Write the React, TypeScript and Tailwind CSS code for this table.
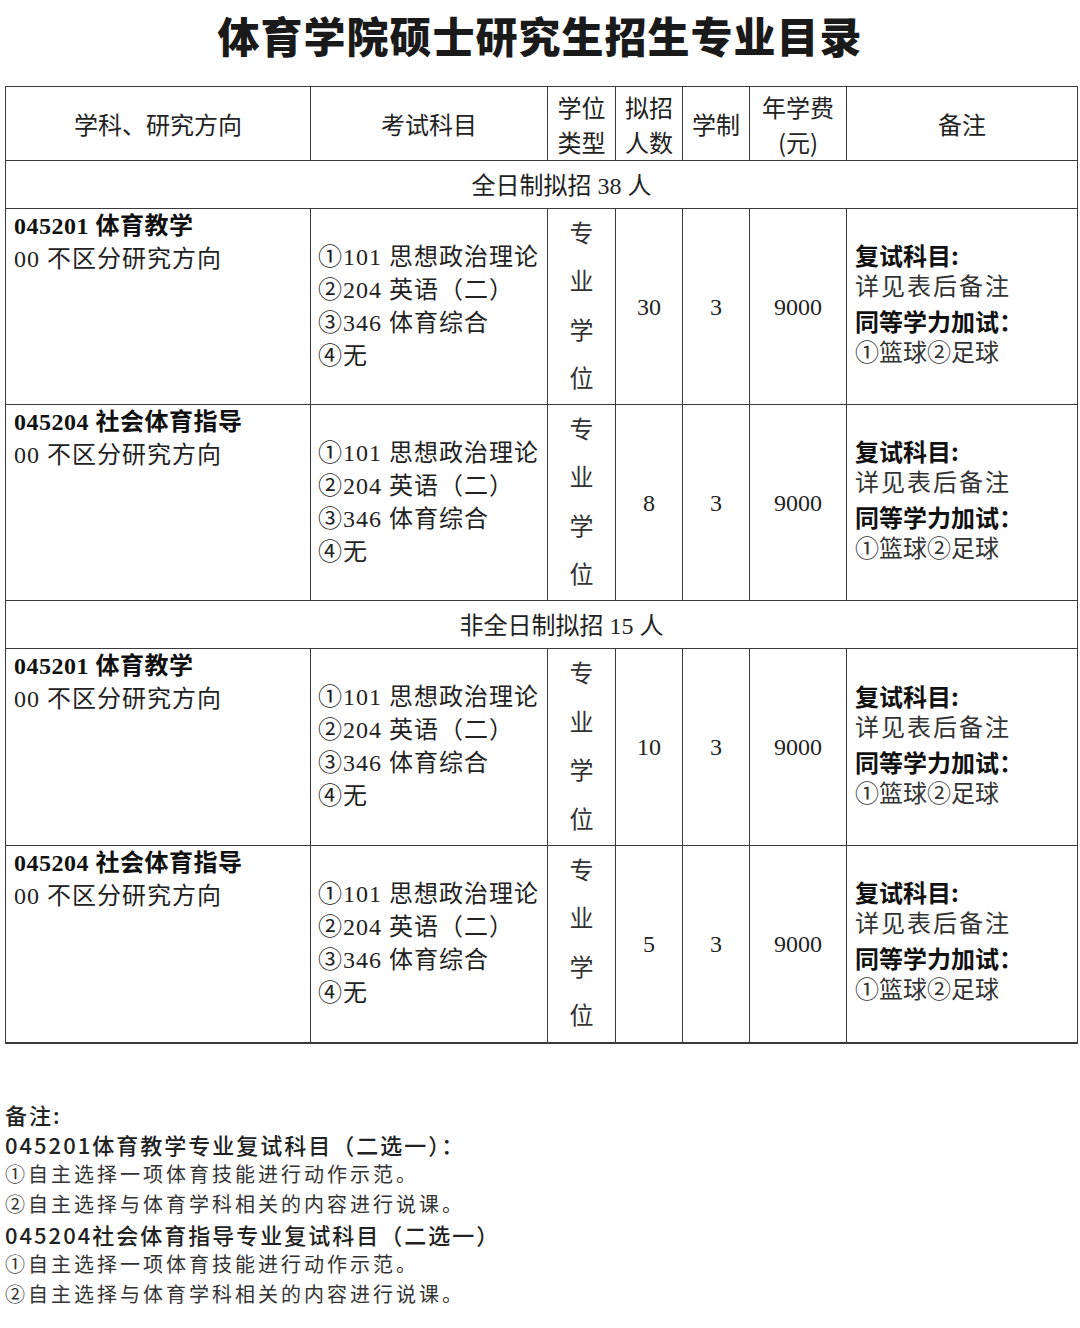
const serif = "font-['Liberation_Serif','Noto_Sans_CJK_SC',serif]";
const sans = "font-['Noto_Sans_CJK_SC','Liberation_Sans',sans-serif]";

type Row = {
  code: string;
  count: string;
};

const fullTime: Row[] = [
  { code: '045201 体育教学', count: '30' },
  { code: '045204 社会体育指导', count: '8' },
];

const partTime: Row[] = [
  { code: '045201 体育教学', count: '10' },
  { code: '045204 社会体育指导', count: '5' },
];

const cell = 'border-[1.5px] border-[#3a3a3a]';

function DataRow({ row, height }: { row: Row; height: string }) {
  return (
    <tr className={height}>
      <td className={`${cell} align-top pl-[8px] pt-[1px] text-[24px] leading-[33px] ${serif}`}>
        <div className="font-bold tracking-[0.5px] text-[#111]">{row.code}</div>
        <div className="tracking-[1px] text-[#222]">00 不区分研究方向</div>
      </td>
      <td className={`${cell} align-middle pl-[7px] text-[24px] leading-[33px] tracking-[1px] text-[#222] ${serif}`}>
        <div>①101 思想政治理论</div>
        <div>②204 英语（二）</div>
        <div>③346 体育综合</div>
        <div>④无</div>
      </td>
      <td className={`${cell} align-middle text-[24px] text-[#333] ${serif}`}>
        <div className="flex flex-col items-center leading-[48.5px]">
          <span>专</span>
          <span>业</span>
          <span>学</span>
          <span>位</span>
        </div>
      </td>
      <td className={`${cell} text-center align-middle text-[24px] text-[#222] ${serif}`}>{row.count}</td>
      <td className={`${cell} text-center align-middle text-[24px] text-[#222] ${serif}`}>3</td>
      <td className={`${cell} text-center align-middle text-[24px] text-[#222] ${serif}`}>9000</td>
      <td className={`${cell} align-middle pl-[8px] pb-[5px] text-[24px] leading-[33px] ${serif}`}>
        <div className={`font-bold text-[#111] ${sans}`}>复试科目:</div>
        <div className="tracking-[2px] text-[#333]">详见表后备注</div>
        <div className={`font-bold text-[#111] ${sans}`}>同等学力加试：</div>
        <div className="text-[#333]">①篮球②足球</div>
      </td>
    </tr>
  );
}

function SectionRow({ label, count }: { label: string; count: string }) {
  return (
    <tr className="h-[48px]">
      <td colSpan={7} className={`${cell} pl-[40px] text-center align-middle text-[24px] text-[#222] ${serif}`}>
        <span className={sans}>{label}</span> {count} 人
      </td>
    </tr>
  );
}

const noteHead = `h-[30px] text-[22px] leading-[30px] font-medium tracking-[2px] text-[#222] ${sans}`;
const noteItem = `h-[30px] text-[20px] leading-[30px] tracking-[3px] text-[#333] ${sans}`;

export default function App() {
  return (
    <div className="w-[1080px] h-[1328px] bg-white overflow-hidden">
      <div className="h-[86px] flex items-center justify-center pb-[18px]">
        <h1 className={`text-[42px] font-black tracking-[1px] text-[#1a1a1a] ${sans}`}>
          体育学院硕士研究生招生专业目录
        </h1>
      </div>

      <table className="ml-[5px] w-[1072px] table-fixed border-collapse border-b-[2.5px] border-[#3a3a3a]">
        <colgroup>
          <col className="w-[305px]" />
          <col className="w-[237px]" />
          <col className="w-[68px]" />
          <col className="w-[67px]" />
          <col className="w-[67px]" />
          <col className="w-[97px]" />
          <col className="w-[231px]" />
        </colgroup>
        <thead>
          <tr className={`h-[74px] text-[24px] text-[#222] ${sans}`}>
            <th className={`${cell} font-normal`}>学科、研究方向</th>
            <th className={`${cell} font-normal`}>考试科目</th>
            <th className={`${cell} font-normal leading-[35px]`}>
              学位
              <br />
              类型
            </th>
            <th className={`${cell} font-normal leading-[35px]`}>
              拟招
              <br />
              人数
            </th>
            <th className={`${cell} font-normal`}>学制</th>
            <th className={`${cell} font-normal leading-[35px]`}>
              年学费
              <br />
              (元)
            </th>
            <th className={`${cell} font-normal`}>备注</th>
          </tr>
        </thead>
        <tbody>
          <SectionRow label="全日制拟招" count="38" />
          {fullTime.map((row) => (
            <DataRow key={row.code} row={row} height="h-[196px]" />
          ))}
          <SectionRow label="非全日制拟招" count="15" />
          {partTime.map((row) => (
            <DataRow key={row.code + '-p'} row={row} height="h-[197px]" />
          ))}
        </tbody>
      </table>

      <div className="mt-[55px] pl-[5px] flex flex-col">
        <div className={noteHead}>备注:</div>
        <div className={noteHead}>045201体育教学专业复试科目（二选一）：</div>
        <div className={noteItem}>①自主选择一项体育技能进行动作示范。</div>
        <div className={noteItem}>②自主选择与体育学科相关的内容进行说课。</div>
        <div className={noteHead}>045204社会体育指导专业复试科目（二选一）</div>
        <div className={noteItem}>①自主选择一项体育技能进行动作示范。</div>
        <div className={noteItem}>②自主选择与体育学科相关的内容进行说课。</div>
      </div>
    </div>
  );
}
